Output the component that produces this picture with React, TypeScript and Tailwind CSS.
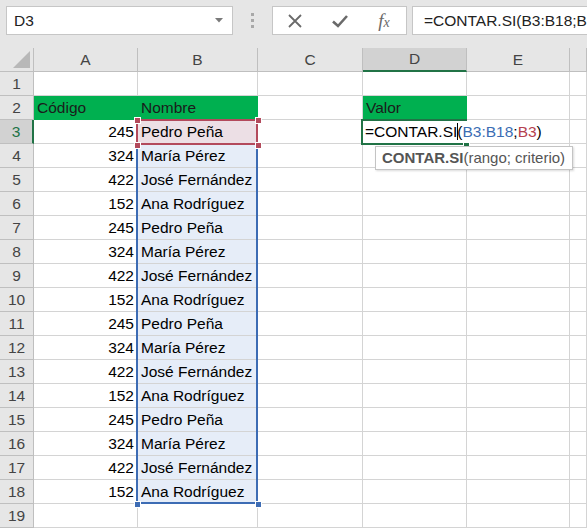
import React from 'react'

const people = [
  { code: 245, name: 'Pedro Peña' },
  { code: 324, name: 'María Pérez' },
  { code: 422, name: 'José Fernández' },
  { code: 152, name: 'Ana Rodríguez' },
]

const rows = Array.from({ length: 16 }, (_, i) => people[i % 4])

const headCell = 'border-r border-b border-[#bfbfbf] bg-[#e6e6e6] text-[#444] flex items-center justify-center'
const cell = 'border-r border-b border-[#d4d4d4] bg-white leading-[23px] px-[3px] whitespace-nowrap overflow-hidden'
const greenCell = 'border-r border-b border-[#00b050] bg-[#00b050] text-[#1b1b1b] leading-[23px] px-[3px] whitespace-nowrap'

const FormulaBar: React.FC = () => {
  return (
    <div className="h-[48px] bg-[#e6e6e6] flex items-start pt-[6px] pl-[6px]">
      <div className="w-[227px] h-[29px] bg-white border border-[#c6c6c6] flex items-center justify-between pl-[7px] pr-[9px] text-[#222]">
        <span>D3</span>
        <svg width="8" height="5" viewBox="0 0 8 5">
          <path d="M0 0 L8 0 L4 4.5 Z" fill="#7a7a7a" />
        </svg>
      </div>
      <div className="w-[39px] h-[29px] flex flex-col items-center justify-center gap-[3px]">
        <span className="w-[3px] h-[3px] bg-[#a8a8a8]" />
        <span className="w-[3px] h-[3px] bg-[#a8a8a8]" />
        <span className="w-[3px] h-[3px] bg-[#a8a8a8]" />
      </div>
      <div className="w-[135px] h-[29px] bg-white border border-[#c6c6c6] flex items-center">
        <div className="w-[44px] flex justify-center">
          <svg width="14" height="14" viewBox="0 0 14 14">
            <path d="M1 1 L13 13 M13 1 L1 13" stroke="#6a6a6a" strokeWidth="1.8" />
          </svg>
        </div>
        <div className="w-[45px] flex justify-center">
          <svg width="16" height="14" viewBox="0 0 16 14">
            <path d="M1 7.5 L6 12 L15 2" stroke="#6a6a6a" strokeWidth="2.6" fill="none" />
          </svg>
        </div>
        <div className="w-[44px] flex justify-center font-['Liberation_Serif',serif] italic text-[#6a6a6a] text-[19px] leading-none">
          <span>f</span>
          <span className="text-[14px] self-end">x</span>
        </div>
      </div>
      <div className="ml-[5px] flex-1 h-[29px] bg-white border-y border-l border-[#c6c6c6] flex items-center pl-[11px] overflow-hidden whitespace-nowrap text-[#222]">
        =CONTAR.SI(B3:B18;B3)
      </div>
    </div>
  )
}

const Sheet: React.FC = () => {
  return (
    <div className="relative">
      <div className="grid grid-cols-[34px_104px_120px_105px_104px_103px_1fr] auto-rows-[24px]">
        <div className={headCell + ' relative'}>
          <svg className="absolute right-[3px] bottom-[3px]" width="17" height="17" viewBox="0 0 17 17">
            <path d="M17 0 L17 17 L0 17 Z" fill="#b8b8b8" />
          </svg>
        </div>
        <div className={headCell}>A</div>
        <div className={headCell}>B</div>
        <div className={headCell}>C</div>
        <div className="border-r border-[#bfbfbf] border-b-2 border-b-[#217346] bg-[#d2d2d2] text-[#444] flex items-center justify-center">
          D
        </div>
        <div className={headCell}>E</div>
        <div className={headCell} />

        {/* row 1 */}
        <div className={headCell}>1</div>
        <div className={cell} />
        <div className={cell} />
        <div className={cell} />
        <div className={cell} />
        <div className={cell} />
        <div className={cell} />

        {/* row 2 */}
        <div className={headCell}>2</div>
        <div className={greenCell}>Código</div>
        <div className={greenCell}>Nombre</div>
        <div className={cell} />
        <div className={greenCell}>Valor</div>
        <div className={cell} />
        <div className={cell} />

        {rows.map((p, i) => {
          const n = i + 3
          const first = n === 3
          return (
            <React.Fragment key={n}>
              {first ? (
                <div className="border-b border-[#bfbfbf] border-r-2 border-r-[#217346] bg-[#d2d2d2] text-[#217346] flex items-center justify-center">
                  {n}
                </div>
              ) : (
                <div className={headCell}>{n}</div>
              )}
              <div className={cell + ' text-right text-black'}>{p.code}</div>
              <div className={cell + (first ? ' !bg-[#ecdfe5]' : ' !bg-[#e6edf8]') + ' text-black'}>{p.name}</div>
              <div className={cell} />
              <div className={cell} />
              <div className={cell} />
              <div className={cell} />
            </React.Fragment>
          )
        })}

        {/* row 19 */}
        <div className={headCell}>19</div>
        <div className={cell} />
        <div className={cell} />
        <div className={cell} />
        <div className={cell} />
        <div className={cell} />
        <div className={cell} />
      </div>

      {/* range B3:B18 */}
      <div className="absolute left-[136px] top-[71px] w-[122px] h-[385px] border-2 border-[#3d6cb4]" />
      <span className="absolute left-[134px] top-[453px] w-[5px] h-[5px] bg-[#3d6cb4] border border-white box-content" />
      <span className="absolute left-[255px] top-[453px] w-[5px] h-[5px] bg-[#3d6cb4] border border-white box-content" />

      {/* reference B3 */}
      <div className="absolute left-[136px] top-[71px] w-[122px] h-[26px] border-2 border-[#b34a5c]" />
      <span className="absolute left-[134px] top-[69px] w-[5px] h-[5px] bg-[#b34a5c] border border-white box-content" />
      <span className="absolute left-[255px] top-[69px] w-[5px] h-[5px] bg-[#b34a5c] border border-white box-content" />
      <span className="absolute left-[134px] top-[94px] w-[5px] h-[5px] bg-[#b34a5c] border border-white box-content" />
      <span className="absolute left-[255px] top-[94px] w-[5px] h-[5px] bg-[#b34a5c] border border-white box-content" />

      {/* active cell D3 in edit mode */}
      <div className="absolute left-[361px] top-[71px] w-[106px] h-[26px] border-2 border-[#217346]" />
      <span className="absolute left-[463px] top-[93px] w-[5px] h-[5px] bg-[#217346] border border-white box-content" />
      <div className="absolute left-[363px] top-[73px] h-[22px] pl-[2px] pr-[4px] bg-white leading-[22px] whitespace-nowrap text-black">
        =CONTAR.SI
        <span className="inline-block w-px h-[17px] bg-black align-[-3px] -mr-px" />
        (<span className="text-[#3b6db3]">B3:B18</span>;<span className="text-[#b5414f]">B3</span>)
      </div>

      {/* function tooltip */}
      <div className="absolute left-[375px] top-[98px] w-[198px] h-[24px] bg-white border border-[#c4c4c4] shadow-[1px_1px_2px_rgba(0,0,0,0.15)] px-[6px] leading-[22px] whitespace-nowrap text-[#555] text-[15px]">
        <span className="font-bold">CONTAR.SI</span>(rango; criterio)
      </div>
    </div>
  )
}

export default function App() {
  return (
    <div className="w-[587px] h-[531px] overflow-hidden bg-white font-['Liberation_Sans',Arial,sans-serif] text-[15.5px]">
      <FormulaBar />
      <Sheet />
    </div>
  )
}
